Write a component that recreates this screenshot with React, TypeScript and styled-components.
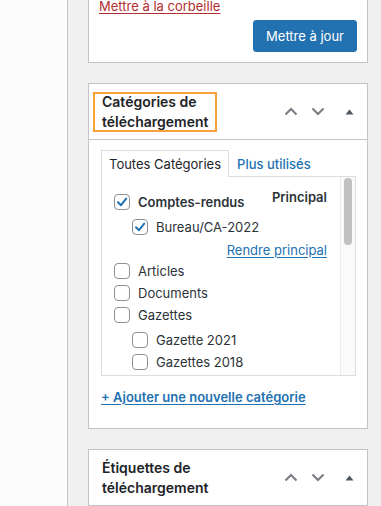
import React from "react";
import styled, { createGlobalStyle } from "styled-components";

const GlobalStyle = createGlobalStyle`
    html, body {
        margin: 0;
        padding: 0;
        height: 100%;
        overflow: hidden;
    }
    body {
        font-family: Inter, "Noto Sans", sans-serif;
        font-size: 13px;
        color: #1d2327;
        -webkit-font-smoothing: antialiased;
    }
`;

type Category = {
    name: string;
    checked?: boolean;
    bold?: boolean;
    children?: Category[];
};

const categories: Category[] = [
    {
        name: "Comptes-rendus",
        checked: true,
        bold: true,
        children: [{ name: "Bureau/CA-2022", checked: true }],
    },
    { name: "Articles" },
    { name: "Documents" },
    {
        name: "Gazettes",
        children: [{ name: "Gazette 2021" }, { name: "Gazettes 2018" }],
    },
];

const ChevronUp = () => (
    <svg width="14" height="9" viewBox="0 0 14 9">
        <path d="M1.5 7.5 L7 2 L12.5 7.5" fill="none" stroke="#787c82" strokeWidth="2" />
    </svg>
);

const ChevronDown = () => (
    <svg width="14" height="9" viewBox="0 0 14 9">
        <path d="M1.5 1.5 L7 7 L12.5 1.5" fill="none" stroke="#787c82" strokeWidth="2" />
    </svg>
);

const Triangle = () => (
    <svg width="9" height="6" viewBox="0 0 9 6">
        <path d="M0.5 5.5 L4.5 0.5 L8.5 5.5 Z" fill="#50575e" />
    </svg>
);

const CheckMark = () => (
    <svg width="14" height="14" viewBox="0 0 14 14">
        <path d="M3 7.2 L6 10.2 L11.2 3.6" fill="none" stroke="#2271b1" strokeWidth="2" strokeLinecap="round" strokeLinejoin="round" />
    </svg>
);

const CategoryItem = ({ cat }: { cat: Category }) => (
    <li>
        <Row>
            <Box>{cat.checked && <CheckMark />}</Box>
            <Label $bold={cat.bold}>{cat.name}</Label>
            {cat.bold && <Primary>Principal</Primary>}
        </Row>
        {cat.children && (
            <Nested>
                {cat.children.map(child => (
                    <React.Fragment key={child.name}>
                        <CategoryItem cat={child} />
                        {child.checked && (
                            <MakePrimaryRow>
                                <TextLink href="#">Rendre principal</TextLink>
                            </MakePrimaryRow>
                        )}
                    </React.Fragment>
                ))}
            </Nested>
        )}
    </li>
);

const Handles = () => (
    <HandleGroup>
        <HandleButton>
            <ChevronUp />
        </HandleButton>
        <HandleButton>
            <ChevronDown />
        </HandleButton>
        <ToggleButton>
            <Triangle />
        </ToggleButton>
    </HandleGroup>
);

const App = () => {
    return (
        <>
            <GlobalStyle />
            <Page>
                <LeftColumn />
                <Sidebar>
                    <PublishCard>
                        <TrashLink href="#">Mettre à la corbeille</TrashLink>
                        <PublishActions>
                            <PrimaryButton>Mettre à jour</PrimaryButton>
                        </PublishActions>
                    </PublishCard>

                    <Card>
                        <CardHeader>
                            <CardTitle $focused>
                                Catégories de
                                <br />
                                téléchargement
                            </CardTitle>
                            <Handles />
                        </CardHeader>
                        <CardBody>
                            <Tabs>
                                <Tab $active>Toutes Catégories</Tab>
                                <Tab>Plus utilisés</Tab>
                            </Tabs>
                            <Panel>
                                <Checklist>
                                    {categories.map(cat => (
                                        <CategoryItem key={cat.name} cat={cat} />
                                    ))}
                                </Checklist>
                                <ScrollTrack>
                                    <ScrollThumb />
                                </ScrollTrack>
                            </Panel>
                            <AddLink href="#">+ Ajouter une nouvelle catégorie</AddLink>
                        </CardBody>
                    </Card>

                    <Card>
                        <CardHeader>
                            <CardTitle>
                                Étiquettes de
                                <br />
                                téléchargement
                            </CardTitle>
                            <Handles />
                        </CardHeader>
                    </Card>
                </Sidebar>
            </Page>
        </>
    );
};

const Page = styled.div`
    display: flex;
    height: 506px;
    overflow: hidden;
`;

const LeftColumn = styled.div`
    width: 67px;
    flex-shrink: 0;
    background: #fcfcfc;
    border-right: 1px solid #c3c4c7;
`;

const Sidebar = styled.div`
    flex: 1;
    background: #f0f0f1;
    padding-left: 20px;
    display: flex;
    flex-direction: column;
    gap: 20px;
`;

const PublishCard = styled.div`
    width: 280px;
    box-sizing: border-box;
    background: #fff;
    border: 1px solid #c3c4c7;
    border-top: none;
    padding: 0 10px 10px 10px;
    display: flex;
    flex-direction: column;
`;

const TrashLink = styled.a`
    color: #b32d2e;
    text-decoration: underline;
    text-underline-offset: 2px;
    margin-top: -3px;
    line-height: 18px;
    align-self: flex-start;
`;

const PublishActions = styled.div`
    display: flex;
    justify-content: flex-end;
    margin-top: 5px;
`;

const PrimaryButton = styled.button`
    background: #2271b1;
    color: #fff;
    border: 1px solid #2271b1;
    border-radius: 3px;
    height: 32px;
    padding: 0 12px;
    font-family: inherit;
    font-size: 13px;
    cursor: pointer;
`;

const Card = styled.div`
    width: 280px;
    box-sizing: border-box;
    flex-shrink: 0;
    background: #fff;
    border: 1px solid #c3c4c7;
`;

const CardHeader = styled.div`
    display: flex;
    align-items: center;
    justify-content: space-between;
    height: 55px;
    border-bottom: 1px solid #c3c4c7;
`;

const CardTitle = styled.h2<{ $focused?: boolean }>`
    margin: 0 0 0 4px;
    padding: 0 9px;
    font-size: 14px;
    font-weight: 600;
    line-height: 20px;
    color: #1d2327;
    box-shadow: ${p => (p.$focused ? "inset 0 0 0 2px #f6a23b" : "none")};
`;

const HandleGroup = styled.div`
    display: flex;
    align-items: center;
    height: 100%;
`;

const HandleButton = styled.span`
    width: 27px;
    height: 36px;
    display: flex;
    align-items: center;
    justify-content: center;
`;

const ToggleButton = styled(HandleButton)`
    width: 36px;
`;

const CardBody = styled.div`
    padding: 10px 11px 0 12px;
    height: 278px;
`;

const Tabs = styled.div`
    display: flex;
    align-items: flex-end;
    margin-bottom: -1px;
`;

const Tab = styled.span<{ $active?: boolean }>`
    padding: 0 7px;
    height: 26px;
    line-height: 26px;
    border: 1px solid ${p => (p.$active ? "#dcdcde" : "transparent")};
    border-bottom: none;
    background: ${p => (p.$active ? "#fff" : "transparent")};
    color: ${p => (p.$active ? "#1d2327" : "#2271b1")};
    font-weight: ${p => (p.$active ? 400 : 500)};
    position: relative;
    z-index: 1;
`;

const Panel = styled.div`
    display: flex;
    height: 200px;
    border: 1px solid #dcdcde;
    box-sizing: border-box;
    overflow: hidden;
`;

const Checklist = styled.ul`
    flex: 1;
    list-style: none;
    margin: 0;
    padding: 14px 13px 0 12px;
`;

const Nested = styled.ul`
    list-style: none;
    margin: 3px 0 0 18px;
    padding: 0;
`;

const Row = styled.div`
    display: flex;
    align-items: center;
    height: 22px;
`;

const Box = styled.span`
    width: 16px;
    height: 16px;
    box-sizing: border-box;
    border: 1px solid #8c8f94;
    border-radius: 4px;
    background: #fff;
    display: flex;
    align-items: center;
    justify-content: center;
    flex-shrink: 0;
    margin-right: 8px;
`;

const Label = styled.span<{ $bold?: boolean }>`
    flex: 1;
    font-weight: ${p => (p.$bold ? 600 : 400)};
    color: #2c3338;
`;

const Primary = styled.span`
    font-weight: 600;
    color: #2c3338;
    align-self: flex-start;
    margin-top: -2px;
`;

const MakePrimaryRow = styled.li`
    display: flex;
    justify-content: flex-end;
    align-items: center;
    height: 20px;
    padding-top: 2px;
`;

const TextLink = styled.a`
    color: #2271b1;
    text-decoration: underline;
    text-underline-offset: 2px;
`;

const ScrollTrack = styled.div`
    width: 15px;
    flex-shrink: 0;
    background: #fafafa;
    border-left: 1px solid #ececec;
    box-sizing: border-box;
    padding: 1px 3px 0 3px;
`;

const ScrollThumb = styled.div`
    width: 8px;
    height: 67px;
    border-radius: 4px;
    background: #c1c1c1;
`;

const AddLink = styled.a`
    display: inline-block;
    margin-top: 13px;
    color: #2271b1;
    font-weight: 600;
    text-decoration: underline;
    text-underline-offset: 2px;
`;

export default App;
